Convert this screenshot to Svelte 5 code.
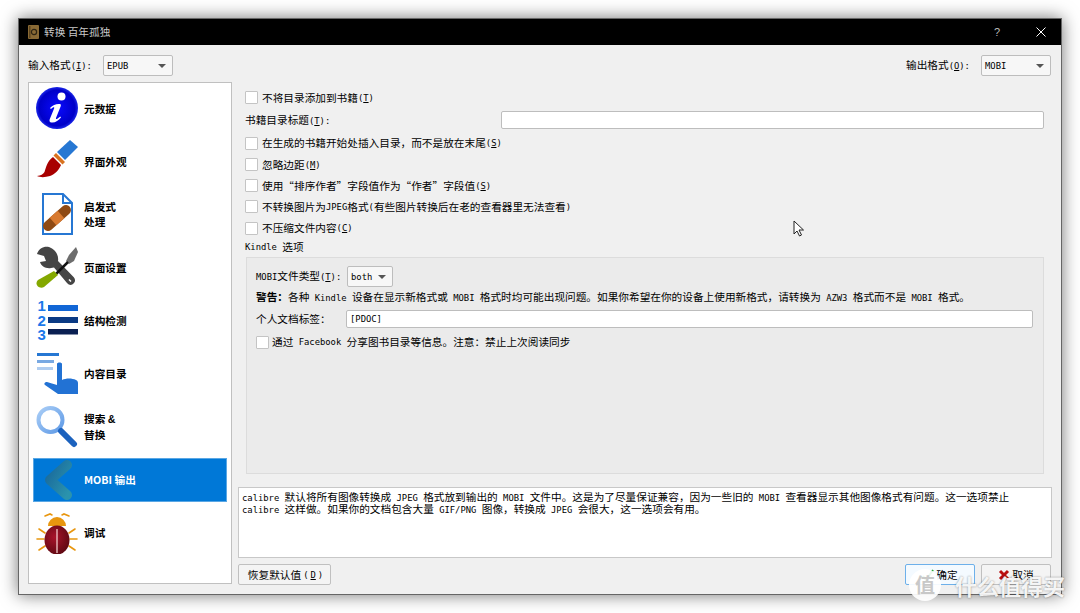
<script>
  const tok = /_[A-Za-z]|[\x20-\x7e]+?(?=_|[^\x20-\x7e]|$)|[^\x20-\x7e]+/g;
  function split(s) {
    return (s.match(tok) || []).map((t) => {
      if (t[0] === '_' && t.length === 2) return { t: t[1], latin: true, u: true };
      return { t, latin: /^[\x20-\x7e]/.test(t), u: false };
    });
  }
  const checks1 = [
    '在生成的书籍开始处插入目录，而不是放在末尾(_S)',
    '忽略边距(_M)',
    '使用“排序作者”字段值作为“作者”字段值(_S)',
    '不转换图片为JPEG格式(有些图片转换后在老的查看器里无法查看)'
  ];
</script>

{#snippet t(s)}{#each split(s) as p}{#if p.latin}<span class="m" class:u={p.u}>{p.t}</span>{:else}{p.t}{/if}{/each}{/snippet}

{#snippet combo(v, w)}
  <div class="combo" style="width:{w}px"><span class="m">{v}</span><svg width="8" height="4" viewBox="0 0 8 4"><path d="M0 0h8L4 4z" fill="#555"/></svg></div>
{/snippet}

<div class="page">
  <div class="win">
    <header class="title">
      <svg class="appicon" width="11" height="14" viewBox="0 0 11 14"><rect width="11" height="14" rx="1" fill="#8a6a35"/><rect x="1" y="1" width="1.5" height="12" fill="#5c4520"/><circle cx="6" cy="7" r="2.6" fill="none" stroke="#2e2413" stroke-width="1.2"/></svg>
      <span class="ttext">转换 百年孤独</span>
      <span class="help">?</span>
      <svg class="close" width="10" height="10" viewBox="0 0 10 10"><path d="M.5.5l9 9M9.5.5l-9 9" stroke="#fff" stroke-width="1"/></svg>
    </header>

    <div class="toolbar">
      <span class="tl">{@render t('输入格式(_I):')}</span>
      {@render combo('EPUB', 70)}
      <span class="sp"></span>
      <span class="tr">{@render t('输出格式(_O):')}</span>
      {@render combo('MOBI', 70)}
    </div>

    <div class="main">
      <nav class="side">
        <div class="item">
          <svg viewBox="0 0 42 42" width="42" height="42"><defs><radialGradient id="g1" cx=".5" cy=".5" r=".5"><stop offset="0" stop-color="#0a0aff"/><stop offset=".85" stop-color="#0000c8"/><stop offset="1" stop-color="#1c28e8"/></radialGradient></defs><circle cx="21" cy="21" r="21" fill="url(#g1)"/><circle cx="25.5" cy="9.5" r="4" fill="#fff"/><path d="M14 21c3-3.5 7-4.500 10-4 1 .3 1 1.300.6 2.500L20 31c-.3 1 .5 1.300 1.300.8l3-2.300.7 1c-2.500 3-6 5.500-9.500 5-2-.3-2.300-1.700-1.800-3.300l4.500-11c.3-1-.5-1.300-1.300-.7l-2 1.500z" fill="#fff"/></svg>
          <span>元数据</span>
        </div>
        <div class="item">
          <svg viewBox="0 0 42 42" width="42" height="42"><path d="M34 0l8 7-13 13-8-8z" fill="#2677d3"/><path d="M20 13l9 9-2.500 2.500-9-9z" fill="#d9731f"/><path d="M17 17l8 8c-2 5-6 9-11 11-5 1.500-10 1.500-13 0 4-.5 6-1.500 7.500-4C10 28 11 21 17 17z" fill="#a80000"/></svg>
          <span>界面外观</span>
        </div>
        <div class="item">
          <svg viewBox="0 0 42 42" width="42" height="42"><path d="M7 1h20l9 9v31H7z" fill="#fff" stroke="#2677d3" stroke-width="2"/><path d="M27 1v9h9" fill="none" stroke="#2677d3" stroke-width="2"/><path d="M12 33l18-16" stroke="#8f4a14" stroke-width="10" stroke-linecap="round"/><path d="M17 28.500l8-7" stroke="#d87a30" stroke-width="10"/></svg>
          <span>启发式<br/>处理</span>
        </div>
        <div class="item">
          <svg viewBox="0 0 42 42" width="42" height="42"><path d="M13 1C8 0 3 2 1 8l7 2 2 5-6 1c1 4 6 7 11 6l3-.5L31 37c2 2.500 5 2.500 6.500.5 2-1.800 2-4.500.3-6.300L22 15c1-6-3-12-9-14z" fill="#454545"/><path d="M33 33.500l2 2" stroke="#fff" stroke-width="1.500"/><path d="M40 1l2 5-4 9-5 3-3-3 3-6z" fill="#6d6d6d"/><path d="M32 16L17 31" stroke="#111" stroke-width="2.500"/><path d="M18 25l4 4L8 41c-2 1.300-5 .8-6.500-1C0 38 .3 35.500 2 34z" fill="#84a800"/></svg>
          <span>页面设置</span>
        </div>
        <div class="item">
          <svg viewBox="0 0 42 42" width="42" height="42"><text x="1.500" y="12" class="num">1</text><text x="1.500" y="27" class="num">2</text><text x="1.500" y="41" class="num">3</text><rect x="12" y="6" width="30" height="6" fill="#1166d6"/><rect x="12" y="18" width="30" height="6" fill="#0a3a84"/><rect x="12" y="30" width="30" height="5.500" fill="#0a1f52"/></svg>
          <span>结构检测</span>
        </div>
        <div class="item">
          <svg viewBox="0 0 42 42" width="42" height="42"><rect x="1" y="1" width="22" height="3" fill="#2677d3"/><rect x="1" y="8" width="17" height="3" fill="#79a9e2"/><rect x="1" y="15" width="16" height="3" fill="#b0cdf0"/><path d="M21 12c0-2 5-2 5 0v16c4-2 10-2 14 0 2 1 2 2 2 4v10H22L9 33c-1.500-1.500 0-3 2-3l10 3z" fill="#2272d4"/></svg>
          <span>内容目录</span>
        </div>
        <div class="item">
          <svg viewBox="0 0 42 42" width="42" height="42"><defs><linearGradient id="g2" x1="0" y1="0" x2="1" y2="1"><stop offset="0" stop-color="#a9cdf6"/><stop offset="1" stop-color="#5f9ae6"/></linearGradient></defs><circle cx="14.500" cy="14" r="12" fill="#fff" stroke="url(#g2)" stroke-width="4"/><path d="M25 25l13 13" stroke="#1c62be" stroke-width="6" stroke-linecap="round"/></svg>
          <span>搜索 <span class="amp">&amp;</span><br/>替换</span>
        </div>
        <div class="item sel">
          <svg viewBox="0 0 42 42" width="42" height="42"><defs><linearGradient id="g3" x1="0" y1="0" x2="1" y2="1"><stop offset="0" stop-color="#1a6a9c"/><stop offset="1" stop-color="#2a93ad"/></linearGradient></defs><path d="M31 6L14 21l17 15" fill="none" stroke="url(#g3)" stroke-width="10" stroke-linejoin="round" stroke-linecap="round"/></svg>
          <span class="white">MOBI 输出</span>
        </div>
        <div class="item">
          <svg viewBox="0 0 42 42" width="42" height="42"><defs><radialGradient id="g4" cx=".4" cy=".4" r=".65"><stop offset="0" stop-color="#a8142a"/><stop offset="1" stop-color="#5e0812"/></radialGradient></defs><path d="M12 14a9 9 0 0 1 18 0z" fill="#e8960f"/><g stroke="#e8960f" stroke-width="1.600" stroke-linecap="round" fill="none"><path d="M9 4l5-2 2 1M33 4l-5-2-2 1M3 17l6 4M39 17l-6 4M1 27h7M41 27h-7M3 38l6-4M39 38l-6-4"/></g><ellipse cx="21" cy="28" rx="12.500" ry="14.500" fill="url(#g4)"/><path d="M21 17v24" stroke="#f2c9c9" stroke-width="1.300"/></svg>
          <span>调试</span>
        </div>
      </nav>

      <div class="right">
        <div class="panel">
          <label class="row"><i class="cb"></i>{@render t('不将目录添加到书籍(_T)')}</label>
          <div class="row tall">
            <span class="ltitle">{@render t('书籍目录标题(_T):')}</span>
            <div class="input"></div>
          </div>
          {#each checks1 as c, i}
            <label class="row" class:r22={i === 0}><i class="cb"></i>{@render t(c)}</label>
          {/each}
          <label class="row r22"><i class="cb"></i>{@render t('不压缩文件内容(_C)')}</label>
          <div class="row kindle">{@render t('Kindle 选项')}</div>

          <section class="group">
            <div class="grow">
              <span class="gl91">{@render t('MOBI文件类型(_T):')}</span>
              {@render combo('both', 46)}
            </div>
            <div class="grow warn"><b>警告：</b>{@render t('各种 Kindle 设备在显示新格式或 MOBI 格式时均可能出现问题。如果你希望在你的设备上使用新格式，请转换为 AZW3 格式而不是 MOBI 格式。')}</div>
            <div class="grow tagrow">
              <span class="gl90">个人文档标签：</span>
              <div class="input"><span class="m">[PDOC]</span></div>
            </div>
            <label class="grow fbrow"><i class="cb"></i>{@render t('通过 Facebook 分享图书目录等信息。注意：禁止上次阅读同步')}</label>
          </section>
        </div>

        <div class="desc">
          <div class="line">{@render t('calibre 默认将所有图像转换成 JPEG 格式放到输出的 MOBI 文件中。这是为了尽量保证兼容，因为一些旧的 MOBI 查看器显示其他图像格式有问题。这一选项禁止')}</div>
          <div class="line">{@render t('calibre 这样做。如果你的文档包含大量 GIF/PNG 图像，转换成 JPEG 会很大，这一选项会有用。')}</div>
        </div>

        <div class="btns">
          <button class="reset">{@render t('恢复默认值(_D)')}</button>
          <span class="sp"></span>
          <button class="ok"><svg width="12" height="12" viewBox="0 0 12 12"><path d="M1 7l3 4 7-10" fill="none" stroke="#1fa52f" stroke-width="2"/></svg>确定</button>
          <button class="cancel"><svg width="12" height="12" viewBox="0 0 12 12"><path d="M2 2l8 8M10 2l-8 8" stroke="#b80f0f" stroke-width="3"/></svg>取消</button>
        </div>
      </div>
    </div>
  </div>

  <svg class="cursor" width="12" height="17" viewBox="0 0 12 17"><path d="M1 1v13l3-3 2.500 5 2-1-2.500-5h4.500z" fill="#fff" stroke="#222" stroke-width="1"/></svg>
  <div class="wm"><span class="wmc">值</span><span class="wmt">什么值得买</span></div>
</div>

<style>
  :global(body) { margin: 0; background: #fff; }
  .page {
    position: relative;
    width: 1080px; height: 613px;
    padding: 18px;
    box-sizing: border-box;
    overflow: hidden;
    background: #fff;
    font: 10.67px/14px "Noto Sans CJK SC", sans-serif;
    color: #000;
  }
  .m { font-family: "DejaVu Sans Mono", monospace; font-size: 8.86px; }
  .u { text-decoration: underline; }
  .sp { flex: 1; }
  .win {
    width: 1044px; height: 577px;
    box-sizing: border-box;
    border: 1px solid #666;
    background: #f0f0f0;
    box-shadow: 0 0 16px rgba(0,0,0,.55);
    display: flex; flex-direction: column;
  }
  .title {
    height: 26px; flex: none;
    background: #000; color: #c8c8c8;
    display: flex; align-items: center;
    padding-left: 9px;
  }
  .appicon { margin-right: 5px; }
  .ttext { flex: 1; }
  .help { color: #bbb; font: 11px "Liberation Sans", sans-serif; margin-right: 36px; }
  .close { margin-right: 15px; }
  .toolbar {
    height: 37px; flex: none; box-sizing: border-box;
    display: flex; align-items: center;
    padding: 4px 10px 0 9px;
  }
  .tl { width: 75px; }
  .tr { width: 75px; }
  .combo {
    height: 21px; box-sizing: border-box;
    border: 1px solid #bdbdbd; border-radius: 2px;
    background: #f7f7f7;
    display: flex; align-items: center; justify-content: space-between;
    padding: 0 6px 0 3px;
  }
  .main { flex: 1; display: flex; gap: 6px; padding: 0 9px 9px 9px; min-height: 0; }
  .side {
    width: 204px; box-sizing: border-box;
    margin-bottom: 1px;
    background: #fff; border: 1px solid #c0c0c0;
    padding: 3px 4px;
    display: flex; flex-direction: column; gap: 9.1px;
  }
  .item {
    height: 44px; flex: none; box-sizing: border-box;
    display: flex; align-items: center; gap: 6px;
    padding-left: 3px;
    font-weight: 700; line-height: 15px; color: #000;
  }
  .item svg { flex: none; }
  .amp { font-family: "Liberation Sans", sans-serif; }
  .num { font: 700 15px "Liberation Sans", sans-serif; fill: #1a78ea; }
  .sel { background: #0078d7; border: 1px solid #5aa7e4; padding-left: 2px; }
  .white { color: #fff; font-size: 10.67px; }
  .right { flex: 1; display: flex; flex-direction: column; min-width: 0; }
  .panel { height: 405px; flex: none; box-sizing: border-box; padding: 5px 8px 0 7px; display: flex; flex-direction: column; }
  .row { height: 21px; flex: none; display: flex; align-items: center; white-space: pre; }
  .tall { height: 24px; }
  .r22 { height: 22px; }
  .cb {
    width: 13px; height: 13px; flex: none; box-sizing: border-box;
    background: #fff; border: 1px solid #c4c4c4; border-radius: 1px;
    margin-right: 4px;
  }
  .ltitle { width: 256px; flex: none; }
  .input {
    flex: 1; height: 18px; box-sizing: border-box;
    background: #fff; border: 1px solid #bdbdbd; border-radius: 2px;
    padding: 0 3px; display: flex; align-items: center;
  }
  .kindle { height: 16px; margin-bottom: 2px; }
  .group {
    height: 217px; flex: none; box-sizing: border-box;
    margin-left: 1px;
    border: 1px solid #dcdcdc; background: #ebebeb;
    padding: 9px 10px 0 9px;
  }
  .grow { display: flex; align-items: center; white-space: pre; }
  .grow:first-child { height: 19px; }
  .gl91 { width: 91px; flex: none; }
  .gl90 { width: 90px; flex: none; }
  .warn { height: 18px; margin-top: 2px; display: block; line-height: 18px; }
  .warn b { font-weight: 700; }
  .tagrow { height: 18px; margin-top: 4px; }
  .fbrow { height: 18px; margin-top: 5px; }
  .fbrow .cb { margin-right: 3px; }
  .desc {
    height: 71px; flex: none; box-sizing: border-box;
    background: #fff; border: 1px solid #c8c8c8;
    padding: 3px 3px; line-height: 12px;
    overflow: hidden;
  }
  .line { height: 12px; white-space: pre; }
  .btns { display: flex; margin-top: 6px; height: 21px; gap: 6px; padding-right: 1px; }
  button {
    font: inherit; color: #000; padding: 0; margin: 0;
    height: 21px; box-sizing: border-box;
    border: 1px solid #c0c0c0; border-radius: 2px; background: #f4f4f4;
    display: flex; align-items: center; justify-content: center; gap: 2px;
  }
  .reset { width: 93px; padding-left: 2px; }
  .ok { width: 70px; border-color: #6db0ea; background: #f4faff; }
  .cancel { width: 70px; }
  .cursor { position: absolute; left: 793px; top: 220px; }
  .wm { position: absolute; left: 909px; top: 569px; display: flex; align-items: center; gap: 14px; pointer-events: none; }
  .wmc {
    width: 32px; height: 32px; border-radius: 50%;
    background: rgba(255,255,255,.92); color: #c8c8c8;
    font-size: 20px; line-height: 32px; text-align: center; font-weight: 700;
  }
  .wmt {
    font-size: 22px; line-height: 32px; font-weight: 700;
    color: rgba(255,255,255,.92);
    text-shadow: 0 0 2px rgba(0,0,0,.45);
  }
</style>
